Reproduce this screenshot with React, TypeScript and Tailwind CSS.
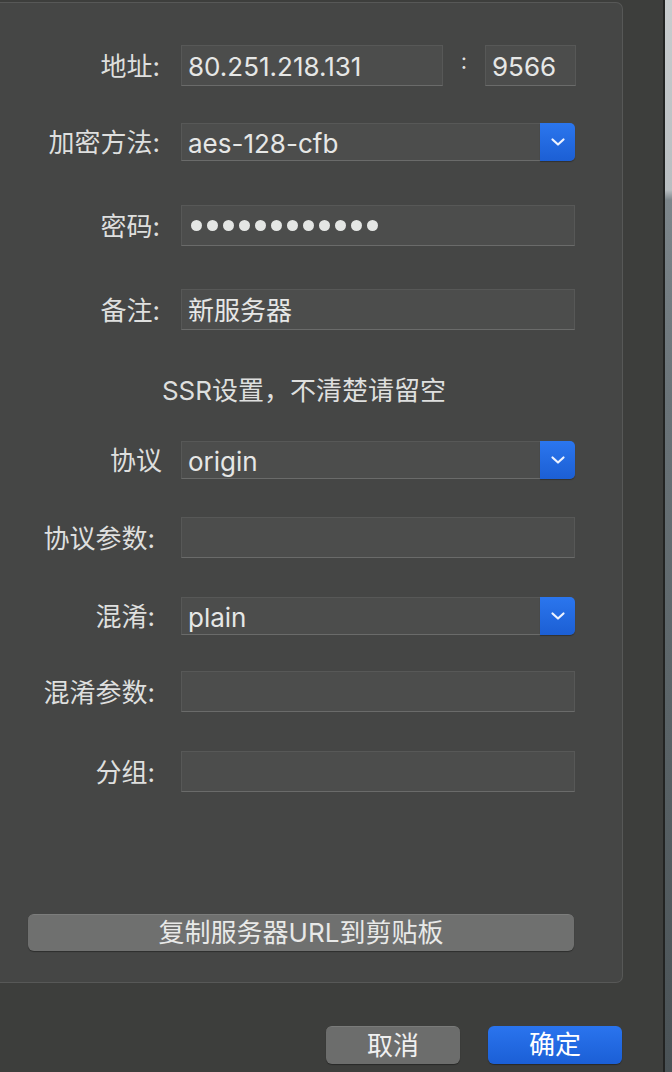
import React from "react";

const font = "font-['Inter','Noto_Sans_CJK_SC',sans-serif]";

function Label({ text, width = "w-[160px]", gap = "mr-[21px]" }: { text: string; width?: string; gap?: string }) {
  return (
    <div className={`${width} ${gap} shrink-0 text-right text-[26px] leading-none pt-[2px] text-[#dedfde]`}>
      {text}
    </div>
  );
}

function Field({ value, width = "w-[394px]", children }: { value?: string; width?: string; children?: React.ReactNode }) {
  return (
    <div
      className={`${width} h-[41px] flex items-center pl-[6px] pt-[3px] bg-[#4c4d4c] border border-[#575857] border-b-[#6a6b6a] text-[26px] leading-none text-[#e6e7e6]`}
    >
      {children ?? value}
    </div>
  );
}

function Popup({ value }: { value: string }) {
  return (
    <div className="w-[394px] h-[38px] flex">
      <div className="flex-1 flex items-center pl-[6px] pt-[3px] bg-[#4c4d4c] border border-[#575857] border-b-[#6a6b6a] border-r-0 text-[26px] leading-none text-[#e6e7e6]">
        {value}
      </div>
      <div className="w-[35px] flex items-center justify-center rounded-r-[5px] bg-gradient-to-b from-[#2b76ee] to-[#1c5fd4] shadow-[0_1px_1px_rgba(0,0,0,0.3)]">
        <svg width="16" height="10" viewBox="0 0 16 10" fill="none">
          <path d="M2.5 2.5 L8 7.5 L13.5 2.5" stroke="#eef3ff" strokeWidth="2.2" strokeLinecap="round" strokeLinejoin="round" />
        </svg>
      </div>
    </div>
  );
}

export default function App() {
  return (
    <div className={`w-[672px] h-[1072px] bg-[#3d3e3c] flex ${font}`}>
      <div className="w-[663px] flex flex-col">
        {/* group box */}
        <div className="mt-[2px] w-[623px] h-[981px] bg-[#454645] border-t border-r border-b border-[#575857] rounded-r-[7px] pt-[42px] flex flex-col">
          <div className="flex items-center">
            <Label text="地址:" />
            <Field value="80.251.218.131" width="w-[262px]" />
            <div className="w-[42px] text-center text-[22px] text-[#dedfde] -mt-[8px]">:</div>
            <Field value="9566" width="w-[91px]" />
          </div>

          <div className="flex items-center mt-[37px]">
            <Label text="加密方法:" />
            <Popup value="aes-128-cfb" />
          </div>

          <div className="flex items-center mt-[44px]">
            <Label text="密码:" />
            <Field>
              <div className="flex gap-[5px] pl-[3px] -mt-[3px]">
                {Array.from({ length: 12 }).map((_, i) => (
                  <span key={i} className="w-[11px] h-[11px] rounded-full bg-[#e4e6e4]" />
                ))}
              </div>
            </Field>
          </div>

          <div className="flex items-center mt-[43px]">
            <Label text="备注:" />
            <Field value="新服务器" />
          </div>

          <div className="mt-[46px] w-[608px] h-[30px] flex items-center justify-center text-[26px] leading-none text-[#dedfde]">
            SSR设置，不清楚请留空
          </div>

          <div className="flex items-center mt-[35px]">
            <Label text="协议" width="w-[162px]" gap="mr-[19px]" />
            <Popup value="origin" />
          </div>

          <div className="flex items-center mt-[38px]">
            <Label text="协议参数:" width="w-[155px]" gap="mr-[26px]" />
            <Field />
          </div>

          <div className="flex items-center mt-[39px]">
            <Label text="混淆:" width="w-[155px]" gap="mr-[26px]" />
            <Popup value="plain" />
          </div>

          <div className="flex items-center mt-[36px]">
            <Label text="混淆参数:" width="w-[155px]" gap="mr-[26px]" />
            <Field />
          </div>

          <div className="flex items-center mt-[39px]">
            <Label text="分组:" width="w-[155px]" gap="mr-[26px]" />
            <Field />
          </div>

          <button className="mt-[122px] ml-[28px] w-[546px] h-[37px] rounded-[6px] bg-[#6f706f] border-t border-[#7c7d7c] shadow-[0_1px_1px_rgba(0,0,0,0.35)] text-[26px] leading-none text-[#e8e9e8] flex items-center justify-center">
            复制服务器URL到剪贴板
          </button>
        </div>

        <div className="mt-[43px] w-[622px] flex justify-end gap-[28px]">
          <button className="w-[134px] h-[38px] rounded-[6px] bg-[#6c6d6c] border-t border-[#7a7b7a] shadow-[0_1px_1px_rgba(0,0,0,0.35)] text-[26px] leading-none text-[#f0f0f0] flex items-center justify-center">
            取消
          </button>
          <button className="w-[134px] h-[38px] rounded-[6px] bg-gradient-to-b from-[#2a74ee] to-[#1b5fd6] shadow-[0_1px_1px_rgba(0,0,0,0.35)] text-[26px] leading-none text-white flex items-center justify-center">
            确定
          </button>
        </div>
      </div>
      <div className="w-[2px] bg-[#232423]" />
      <div className="flex-1 bg-[linear-gradient(to_bottom,#c9cdcf_0px,#b9bec1_190px,#7d868b_200px,#6a7378_400px,#5b6468_700px,#4a5256_1072px)]" />
    </div>
  );
}
